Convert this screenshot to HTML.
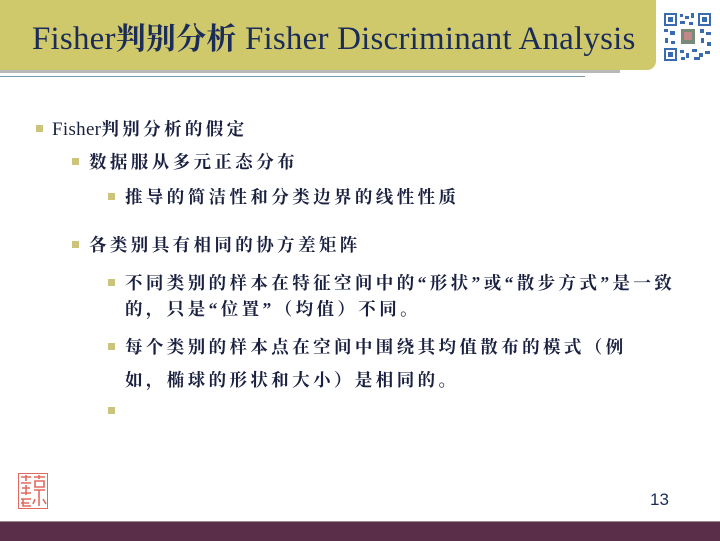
<!DOCTYPE html>
<html><head><meta charset="utf-8"><style>
body{margin:0;width:720px;height:540px;position:relative;background:#fff;overflow:hidden;font-family:"Liberation Serif","Noto Serif CJK SC",serif;}
.bar{position:absolute;left:0;top:0;width:656px;height:70px;background:#cfc96c;border-bottom-right-radius:9px;}
.shadow{position:absolute;left:0;top:70px;width:620px;height:3px;background:#b8b8b8;}
.line{position:absolute;left:0;top:76px;width:585px;height:1px;background:#7a9ab0;}
.title{position:absolute;left:32px;top:14px;font-size:33px;color:#1c2c58;white-space:nowrap;letter-spacing:0.2px;}
.title .c{font-weight:bold;font-size:30px;}
.t{position:absolute;font-size:17.5px;color:#1a2040;white-space:nowrap;letter-spacing:3.4px;font-weight:bold;}
.t .l{letter-spacing:0.3px;font-weight:normal;font-size:19px;}
.b{position:absolute;width:7px;height:7px;background:#cbc47a;}
.foot{position:absolute;left:0;top:521px;width:720px;height:19px;background:#5a2e48;border-top:1px solid #9a8a90;}
.num{position:absolute;left:650px;top:490px;font-family:"Liberation Sans",sans-serif;font-size:17px;color:#1c2c58;}
</style></head><body>
<div class="bar"></div><div class="shadow"></div><div class="line"></div>
<div class="title">Fisher<span class="c">判别分析</span> Fisher Discriminant Analysis</div>
<svg style="position:absolute;left:664px;top:13px" width="47" height="48" viewBox="0 0 47 48">
<g fill="#3a6ab0">
<rect x="0" y="0" width="13" height="13"/><rect x="34" y="0" width="13" height="13"/><rect x="0" y="35" width="13" height="13"/>
</g><g fill="#fff"><rect x="2" y="2" width="9" height="9"/><rect x="36" y="2" width="9" height="9"/><rect x="2" y="37" width="9" height="9"/></g>
<g fill="#3a6ab0"><rect x="4" y="4" width="5" height="5"/><rect x="38" y="4" width="5" height="5"/><rect x="4" y="39" width="5" height="5"/>
<rect x="16" y="1" width="3" height="3"/><rect x="21" y="3" width="4" height="3"/><rect x="27" y="0" width="3" height="5"/><rect x="16" y="8" width="5" height="3"/><rect x="25" y="9" width="4" height="3"/>
<rect x="0" y="16" width="4" height="3"/><rect x="6" y="18" width="5" height="4"/><rect x="1" y="25" width="3" height="5"/><rect x="7" y="28" width="4" height="3"/>
<rect x="36" y="16" width="4" height="4"/><rect x="42" y="19" width="5" height="3"/><rect x="37" y="25" width="3" height="5"/><rect x="43" y="29" width="4" height="4"/>
<rect x="16" y="37" width="4" height="3"/><rect x="22" y="40" width="3" height="5"/><rect x="28" y="36" width="5" height="3"/><rect x="35" y="40" width="4" height="4"/><rect x="41" y="38" width="5" height="3"/><rect x="30" y="44" width="6" height="3"/><rect x="17" y="44" width="4" height="3"/>
</g>
<rect x="17" y="16" width="14" height="15" fill="#7a8a78"/><rect x="20" y="19" width="8" height="8" fill="#c08a8a"/>
</svg>
<div class="b" style="left:36px;top:125px"></div><div class="t" style="left:52px;top:116px"><span class="l">Fisher</span>判别分析的假定</div>
<div class="b" style="left:72px;top:158px"></div><div class="t" style="left:89px;top:149px">数据服从多元正态分布</div>
<div class="b" style="left:108px;top:193px"></div><div class="t" style="left:125px;top:184px">推导的简洁性和分类边界的线性性质</div>
<div class="b" style="left:72px;top:241px"></div><div class="t" style="left:89px;top:232px">各类别具有相同的协方差矩阵</div>
<div class="b" style="left:108px;top:279px"></div><div class="t" style="left:125px;top:270px">不同类别的样本在特征空间中的“形状”或“散步方式”是一致</div>
<div class="t" style="left:125px;top:296px">的，只是“位置”（均值）不同。</div>
<div class="b" style="left:108px;top:343px"></div><div class="t" style="left:125px;top:334px">每个类别的样本点在空间中围绕其均值散布的模式（例</div>
<div class="t" style="left:125px;top:367px">如，椭球的形状和大小）是相同的。</div>
<div class="b" style="left:108px;top:407px"></div>
<svg style="position:absolute;left:18px;top:473px" width="30" height="36" viewBox="0 0 30 36">
<rect x="0.5" y="0.5" width="29" height="35" fill="#fff" stroke="#e06a60"/>
<g stroke="#e06a60" stroke-width="1.6" fill="none">
<path d="M3 4h10M8 2v6M3 10h10M4 15h8M8 12v10M3 20h10"/><path d="M3 26h10M5 26v7h8M3 30h8"/>
<path d="M16 4h11M21 2v4M17 8h9v6h-9zM16 17h11M21 17v16M17 26l-2 5M25 26l3 5"/>
</g></svg>
<div class="num">13</div>
<div class="foot"></div>
</body></html>
